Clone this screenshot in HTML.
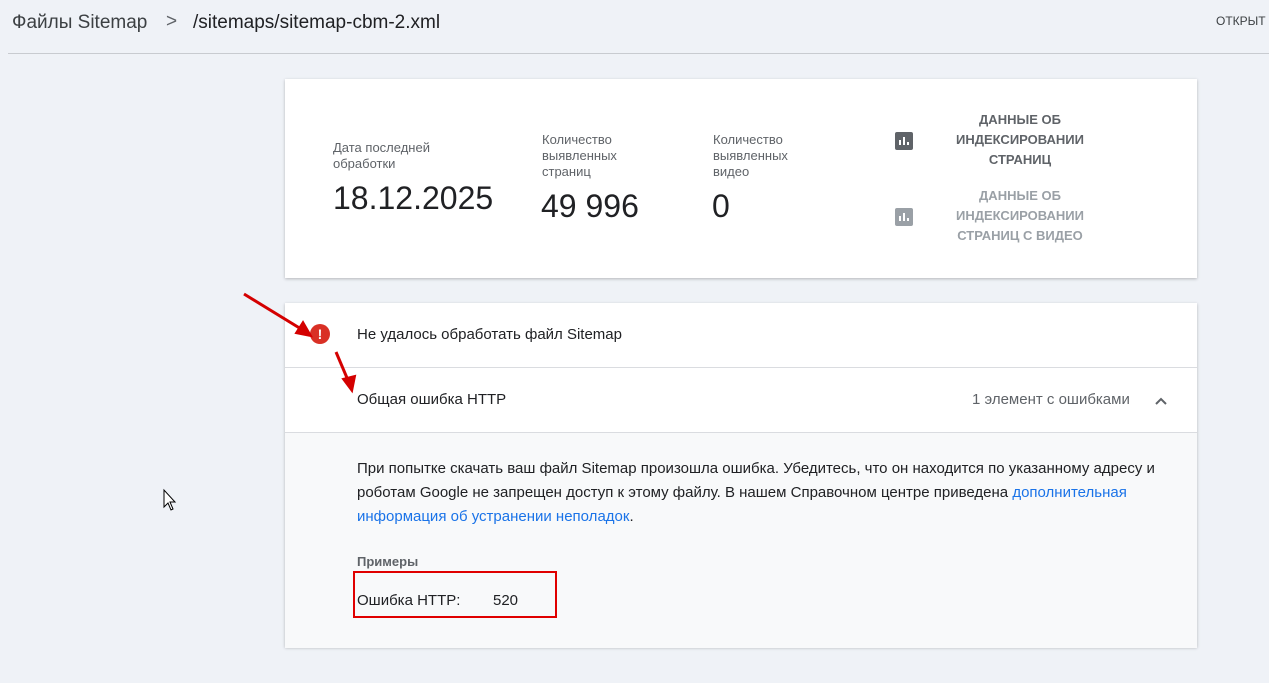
<!DOCTYPE html>
<html><head><meta charset="utf-8"><style>
body{margin:0;width:1269px;height:683px;background:#eff2f7;font-family:"Liberation Sans",Arial,sans-serif;position:relative;overflow:hidden;color:#202124}
.a{position:absolute}
.card{position:absolute;background:#fff;box-shadow:0 1px 3px rgba(0,0,0,.25)}
.lbl{font-size:13px;color:#5f6368;line-height:16px}
.num{font-size:32px;color:#202124}
.lk{font-size:13px;font-weight:bold;color:#5f6368;text-align:center;line-height:20px;width:170px}
.ic{width:18px;height:18px;border-radius:2px;background:#5f6368}
</style></head><body>
<div class="a" style="left:12px;top:12px;font-size:19px;color:#3c4043">Файлы Sitemap</div>
<div class="a" style="left:166px;top:11px;font-size:19px;color:#5f6368">&gt;</div>
<div class="a" style="left:193px;top:12px;font-size:19px;color:#202124">/sitemaps/sitemap-cbm-2.xml</div>
<div class="a" style="left:1216px;top:14px;font-size:12px;color:#3c4043">ОТКРЫТ</div>
<div class="a" style="left:8px;top:53px;width:1261px;height:1px;background:#c8cbd0"></div>

<div class="card" style="left:285px;top:79px;width:912px;height:199px">
 <div class="a lbl" style="left:48px;top:61px">Дата последней<br>обработки</div>
 <div class="a num" style="left:48px;top:101px">18.12.2025</div>
 <div class="a lbl" style="left:257px;top:53px">Количество<br>выявленных<br>страниц</div>
 <div class="a num" style="left:256px;top:109px">49 996</div>
 <div class="a lbl" style="left:428px;top:53px">Количество<br>выявленных<br>видео</div>
 <div class="a num" style="left:427px;top:109px">0</div>
 <div class="a ic" style="left:610px;top:53px"><svg width="18" height="18"><path d="M5 13V8M9 13V5M13 13V10" stroke="#fff" stroke-width="2"/></svg></div>
 <div class="a lk" style="left:650px;top:31px">ДАННЫЕ ОБ<br>ИНДЕКСИРОВАНИИ<br>СТРАНИЦ</div>
 <div class="a ic" style="left:610px;top:129px;background:#9aa0a6"><svg width="18" height="18"><path d="M5 13V8M9 13V5M13 13V10" stroke="#fff" stroke-width="2"/></svg></div>
 <div class="a lk" style="left:650px;top:107px;color:#9aa0a6">ДАННЫЕ ОБ<br>ИНДЕКСИРОВАНИИ<br>СТРАНИЦ С ВИДЕО</div>
</div>

<div class="card" style="left:285px;top:303px;width:912px;height:344px">
 <div class="a" style="left:25px;top:21px;width:20px;height:20px;border-radius:50%;background:#d93025;color:#fff;font-weight:bold;font-size:14px;text-align:center;line-height:20px">!</div>
 <div class="a" style="left:72px;top:23px;font-size:15px">Не удалось обработать файл Sitemap</div>
 <div class="a" style="left:0;top:64px;width:912px;height:1px;background:#dadce0"></div>
 <div class="a" style="left:72px;top:88px;font-size:15px">Общая ошибка HTTP</div>
 <div class="a" style="left:687px;top:88px;font-size:15px;color:#5f6368">1 элемент с ошибками</div>
 <svg class="a" style="left:868px;top:90px" width="16" height="16"><path d="M3 11L8 6L13 11" stroke="#5f6368" stroke-width="2" fill="none"/></svg>
 <div class="a" style="left:0;top:129px;width:912px;height:215px;background:#f8f9fa;border-top:1px solid #dadce0"></div>
 <div class="a" style="left:72px;top:154px;width:820px;font-size:15px;line-height:24px">При попытке скачать ваш файл Sitemap произошла ошибка. Убедитесь, что он находится по указанному адресу и роботам Google не запрещен доступ к этому файлу. В нашем Справочном центре приведена <span style="color:#1a73e8">дополнительная информация об устранении неполадок</span>.</div>
 <div class="a" style="left:72px;top:251px;font-size:13px;font-weight:bold;color:#5f6368">Примеры</div>
 <div class="a" style="left:72px;top:289px;font-size:15px">Ошибка HTTP:</div>
 <div class="a" style="left:208px;top:289px;font-size:15px">520</div>
 <div class="a" style="left:68px;top:268px;width:204px;height:47px;border:2px solid #e00000;box-sizing:border-box"></div>
</div>
<svg class="a" style="left:0;top:0" width="1269" height="683">
 <path d="M244 294L306 332" stroke="#d40000" stroke-width="3"/><path d="M311 336L296 333L303 322Z" fill="#d40000" stroke="#d40000" stroke-width="2"/>
 <path d="M336 352L350 385" stroke="#d40000" stroke-width="3"/><path d="M352 391L343 379L355 376Z" fill="#d40000" stroke="#d40000" stroke-width="2"/>
 <path d="M164 490V507L168 503L171 510L173 509L170 502L175 502Z" fill="#fff" stroke="#000" stroke-width="1"/>
</svg>
</body></html>
